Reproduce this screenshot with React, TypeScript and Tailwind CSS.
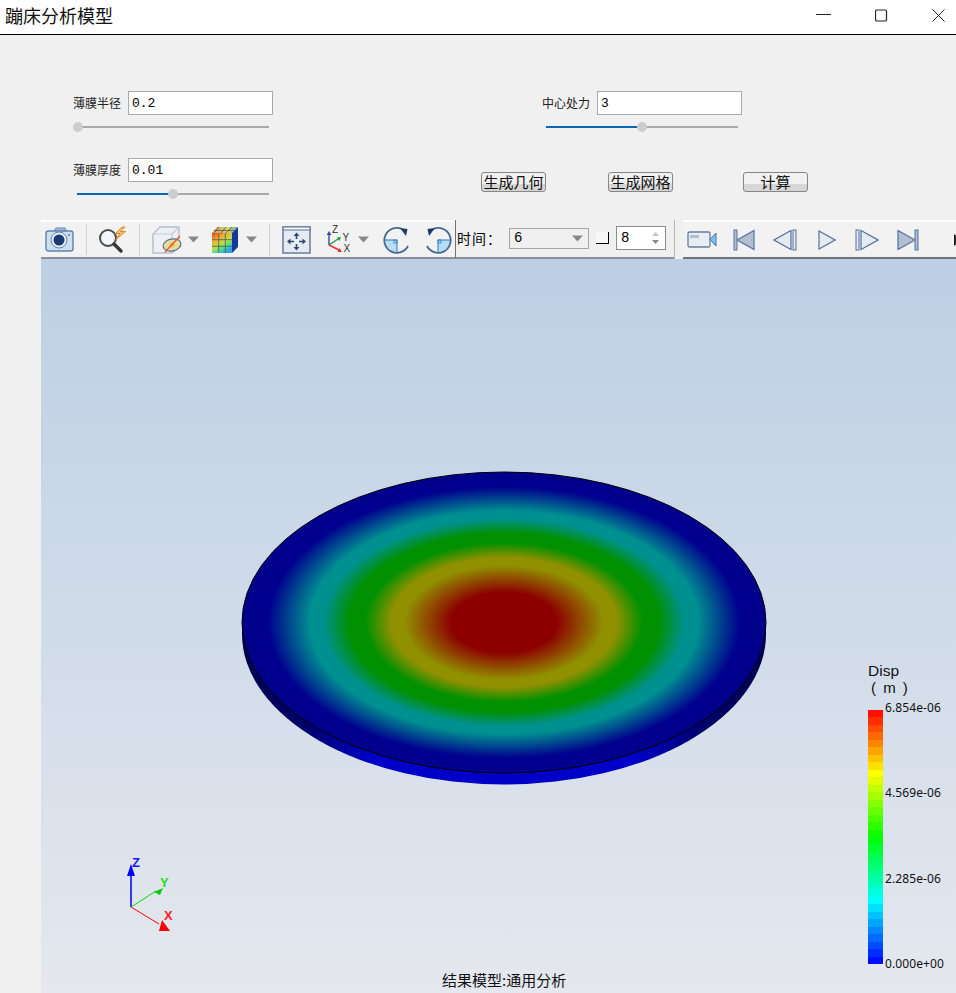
import { ReactNode } from 'react';

const Caret = ({ className = '' }: { className?: string }) => (
  <svg width="11" height="7" viewBox="0 0 11 7" className={className}>
    <path d="M0 0.5h11L5.5 6.5z" fill="#85898f" />
  </svg>
);

function SliderField({ label, value, percent }: { label: string; value: string; percent: number }) {
  return (
    <div className="w-[200px]">
      <div className="flex items-center">
        <span className="w-[48px] text-[12px] leading-none text-[#222]">{label}</span>
        <input
          readOnly
          value={value}
          className="ml-[7px] h-[24px] w-[145px] border border-[#a9a9a9] bg-white pl-[3px] pt-[1px] font-['Liberation_Mono',monospace] text-[13px] text-black outline-none"
        />
      </div>
      <div className="relative ml-[4px] mt-[11px] h-[2px] w-[192px] bg-[#a9a9a9]">
        <div className="h-full bg-[#0a68b8]" style={{ width: `${percent}%` }} />
        <div
          className="absolute top-[-4px] ml-[-5px] h-[10px] w-[10px] rounded-full bg-[#cdcdcd]"
          style={{ left: `${percent}%` }}
        />
      </div>
    </div>
  );
}

function ActionButton({ children, className = '' }: { children: ReactNode; className?: string }) {
  return (
    <button className={`h-[20px] w-[65px] rounded-[3px] border border-[#868686] bg-linear-to-b from-[#f1f1f1] from-60% to-[#d6d6d6] to-60% pb-[1px] text-[15px] leading-none text-[#111] ${className}`}>
      {children}
    </button>
  );
}

const Sep = ({ className = '' }: { className?: string }) => <div className={`h-[31px] w-px bg-[#cfd2d6] ${className}`} />;

const CameraIcon = () => (
  <svg width="30" height="26" viewBox="0 0 30 26" className="ml-[4px]">
    <path d="M9 4l2-3h9l1.500 3z" fill="#a9c0dc" stroke="#5f82ad" />
    <rect x="1" y="4" width="27" height="20" rx="2.500" fill="#cfdef0" stroke="#5f82ad" strokeWidth="1.400" />
    <circle cx="14" cy="13" r="8" fill="#e6eef8" stroke="#5f82ad" />
    <circle cx="14" cy="13" r="5.500" fill="#1c3a73" />
    <circle cx="24" cy="8" r="1" fill="#4d6f9c" />
  </svg>
);

const SearchBoltIcon = () => (
  <svg width="31" height="28" viewBox="0 0 31 28" className="ml-[11px]">
    <circle cx="10" cy="12" r="8" fill="#f3f6fa" stroke="#474b50" strokeWidth="2" />
    <path d="M16 18l7 7" stroke="#34383d" strokeWidth="3.400" strokeLinecap="round" />
    <path d="M24 1l-6.500 6.500h4.500l-4 6 9.500-8h-5l4.500-4.500z" fill="#f3c078" stroke="#e08a1c" strokeWidth="1" />
  </svg>
);

const CubeEyeIcon = () => (
  <svg width="31" height="29" viewBox="0 0 31 29" className="ml-[12px]">
    <path d="M1 9l7-7h19v19l-7 7H1z" fill="#eef0f4" stroke="#b6c0d0" strokeWidth="1.500" />
    <path d="M1 9h19v19M20 9l7-7" fill="none" stroke="#c2cbd8" strokeWidth="1.200" />
    <ellipse cx="20" cy="20" rx="9" ry="6" transform="rotate(-12 20 20)" fill="#ecdc9b" stroke="#4f6f98" strokeWidth="1.200" />
    <circle cx="20" cy="20" r="2.500" fill="#e0b964" />
    <path d="M28 11L13 27" stroke="#d8562a" strokeWidth="1.200" />
  </svg>
);

const ColorCubeIcon = () => (
  <svg width="28" height="28" viewBox="0 0 28 28" className="ml-[12px]">
    <defs>
      <linearGradient id="cubeFront" x1="0" y1="0" x2="0.6" y2="1">
        <stop offset="0" stopColor="#e8402e" />
        <stop offset="0.35" stopColor="#f2b12e" />
        <stop offset="0.6" stopColor="#b5e04a" />
        <stop offset="0.85" stopColor="#3fd6a0" />
        <stop offset="1" stopColor="#2aa4e8" />
      </linearGradient>
      <linearGradient id="cubeTop" x1="0" y1="0" x2="1" y2="0">
        <stop offset="0" stopColor="#e09a5a" />
        <stop offset="0.6" stopColor="#d8cf70" />
        <stop offset="1" stopColor="#62b08a" />
      </linearGradient>
    </defs>
    <path d="M1 7l5-6h21l-6 6z" fill="url(#cubeTop)" />
    <path d="M21 7l6-6v20l-6 6z" fill="#15389a" />
    <rect x="1" y="7" width="20" height="20" fill="url(#cubeFront)" />
    <path d="M7.700 7v20M14.300 7v20M1 13.700h20M1 20.300h20M8 1L3 7M15 1l-5 6M21 1l-6 6M3 4.500h21" stroke="#4d5a52" strokeWidth="0.800" fill="none" />
  </svg>
);

const FitIcon = () => (
  <svg width="29" height="28" viewBox="0 0 29 28" className="ml-[12px]">
    <rect x="1" y="1" width="27" height="26" fill="#e6ebf2" stroke="#5c7497" strokeWidth="1.400" />
    <rect x="1" y="1" width="27" height="3" fill="#f6f8fb" stroke="#5c7497" />
    <path d="M14.500 9v4M14.500 18v4M7 15.500h5M17 15.500h5" stroke="#2f4a70" strokeWidth="1.600" />
    <path d="M14.500 6.500l3 3.500h-6zM14.500 24.500l3-3.500h-6zM5 15.500l3.500-3v6zM24 15.500l-3.500-3v6z" fill="#2f4a70" />
  </svg>
);

const TriadIcon = () => (
  <svg width="26" height="29" viewBox="0 0 26 29" className="ml-[16px] font-['Liberation_Sans',sans-serif]">
    <path d="M2 20V9" stroke="#2a4fa8" strokeWidth="1.400" />
    <path d="M2 6l2.500 4h-5z" fill="#2a4fa8" />
    <path d="M2 20l9-6" stroke="#1e9a3c" strokeWidth="1.400" />
    <path d="M14 12l-1.500 4-2.800-3.500z" fill="#1e9a3c" />
    <path d="M2 20l10 5" stroke="#e13232" strokeWidth="1.400" />
    <path d="M15 27l-4.500 0 2-4z" fill="#e13232" />
    <text x="5" y="7.500" fontSize="10" fill="#333">Z</text>
    <text x="15.500" y="15.500" fontSize="10" fill="#333">Y</text>
    <text x="16.500" y="27" fontSize="10" fill="#333">X</text>
  </svg>
);

const RotateIcon = ({ flip = false, className = '' }: { flip?: boolean; className?: string }) => (
  <svg width="28" height="28" viewBox="0 0 28 28" className={`${flip ? '-scale-x-100' : ''} ${className}`}>
    <path d="M2 14H14V26A12 12 0 0 1 2 14z" fill="#b5def5" />
    <path d="M19 3A12.500 12.500 0 1 0 25 20" fill="none" stroke="#466790" strokeWidth="1.800" />
    <path d="M1.500 14H14V26" fill="none" stroke="#2f7cc0" strokeWidth="1" />
    <rect x="11" y="14" width="3" height="3" fill="none" stroke="#2f7cc0" strokeWidth="0.800" />
    <path d="M17 2l7.500 1-1.500 7z" fill="#1c3a6e" />
  </svg>
);

const CamcorderIcon = () => (
  <svg width="31" height="17" viewBox="0 0 31 17" className="ml-[4px] shrink-0">
    <rect x="1" y="1" width="22" height="15" rx="1.500" fill="#e8edf4" stroke="#647ea3" strokeWidth="1.300" />
    <rect x="3" y="4" width="9" height="3" fill="#b4bfcd" />
    <path d="M23 8.500L29 2v13z" fill="#7cc3e8" stroke="#4f70a0" />
  </svg>
);

const playerDark = '#b2bfd1';
const playerLight = '#e6ebf2';
const playerStroke = '#55729c';

const PlayerFirst = ({ className = '' }: { className?: string }) => (
  <svg width="22" height="22" viewBox="0 0 22 22" className={`shrink-0 ${className}`}>
    <path d="M21 1.500v19L4 11z" fill={playerDark} stroke={playerStroke} strokeWidth="1.200" />
    <rect x="1" y="1" width="3" height="20" fill={playerDark} stroke={playerStroke} />
  </svg>
);

const PlayerPrev = ({ className = '' }: { className?: string }) => (
  <svg width="24" height="22" viewBox="0 0 24 22" className={`shrink-0 ${className}`}>
    <path d="M18 1.500v19L1 11z" fill={playerLight} stroke={playerStroke} strokeWidth="1.200" />
    <rect x="20" y="1" width="3" height="20" fill={playerLight} stroke={playerStroke} />
  </svg>
);

const PlayerPlay = ({ className = '' }: { className?: string }) => (
  <svg width="18" height="20" viewBox="0 0 18 20" className={`shrink-0 ${className}`}>
    <path d="M1 1v18l16-9z" fill={playerLight} stroke={playerStroke} strokeWidth="1.200" />
  </svg>
);

const PlayerNext = ({ className = '' }: { className?: string }) => (
  <svg width="24" height="22" viewBox="0 0 24 22" className={`shrink-0 ${className}`}>
    <rect x="1" y="1" width="3" height="20" fill={playerLight} stroke={playerStroke} />
    <path d="M6 1.500v19L23 11z" fill={playerLight} stroke={playerStroke} strokeWidth="1.200" />
  </svg>
);

const PlayerLast = ({ className = '' }: { className?: string }) => (
  <svg width="22" height="22" viewBox="0 0 22 22" className={`shrink-0 ${className}`}>
    <path d="M1 1.500v19L18 11z" fill={playerDark} stroke={playerStroke} strokeWidth="1.200" />
    <rect x="18" y="1" width="3" height="20" fill={playerDark} stroke={playerStroke} />
  </svg>
);

function Toolbar() {
  return (
    <div className="flex h-[39px] bg-[#f0f0f0]">
      <div className="flex w-[414px] items-center border-b-2 border-t-2 border-b-[#8b9098] border-t-white bg-[#f2f2f2]">
        <CameraIcon />
        <Sep className="ml-[11px]" />
        <SearchBoltIcon />
        <Sep className="ml-[10px]" />
        <CubeEyeIcon />
        <Caret className="ml-[5px]" />
        <ColorCubeIcon />
        <Caret className="ml-[7px]" />
        <Sep className="ml-[12px]" />
        <FitIcon />
        <TriadIcon />
        <Caret className="ml-[5px]" />
        <RotateIcon className="ml-[14px]" />
        <RotateIcon flip className="ml-[13px]" />
      </div>
      <div className="flex w-[219px] items-center border-b-2 border-l border-b-[#8b9098] border-l-[#6e7175] pb-[1px]">
        <span className="ml-[1px] w-[52px] pt-[1px] text-[14px] tracking-[1px] text-black">时间：</span>
        <div className="flex h-[21px] w-[80px] items-center justify-between border border-[#a5a5a5] pl-[4px] pr-[5px] font-['Liberation_Mono',monospace] text-[14px]">
          6
          <Caret />
        </div>
        <div className="ml-[7px] h-[12px] w-[13px] border-b border-r border-b-black border-r-black bg-[#f7f7f7]" />
        <div className="ml-[7px] flex h-[24px] w-[50px] items-center justify-between border border-[#8c8c8c] bg-white pl-[4px] pr-[6px] font-['Liberation_Mono',monospace] text-[14px]">
          8
          <svg width="7" height="12" viewBox="0 0 7 12">
            <path d="M3.500 0L7 4H0z" fill="#c6c6c6" />
            <path d="M0 8h7l-3.500 4z" fill="#8a8a8a" />
          </svg>
        </div>
      </div>
      <div className="w-px self-stretch bg-[#b5b5b5]" />
      <div className="ml-[8px] flex flex-1 items-center overflow-hidden border-b-2 border-t-2 border-b-[#6f7276] border-t-white bg-[#f2f2f2]">
        <CamcorderIcon />
        <PlayerFirst className="ml-[15px]" />
        <PlayerPrev className="ml-[18px]" />
        <PlayerPlay className="ml-[21px]" />
        <PlayerNext className="ml-[19px]" />
        <PlayerLast className="ml-[18px]" />
        <svg width="8" height="12" viewBox="0 0 8 12" className="ml-[35px] shrink-0">
          <path d="M0 0l8 6-8 6z" fill="#222" />
        </svg>
      </div>
    </div>
  );
}

const bandCount = 34;

function jet(t: number) {
  const r = Math.min(1, Math.max(0, t < 0.5 ? 0 : t < 0.75 ? (t - 0.5) * 4 : 1));
  const g = Math.min(1, Math.max(0, t < 0.25 ? t * 4 : t < 0.75 ? 1 : (1 - t) * 4));
  const b = Math.min(1, Math.max(0, t < 0.25 ? 1 : t < 0.5 ? (0.5 - t) * 4 : 0));
  return `rgb(${Math.round(r * 255)},${Math.round(g * 255)},${Math.round(b * 255)})`;
}

function Legend() {
  const labels = ['6.854e-06', '4.569e-06', '2.285e-06', '0.000e+00'];
  return (
    <div className="absolute left-[827px] top-[403px] text-[#111]">
      <div className="font-['Liberation_Sans',sans-serif] text-[15px] leading-[17px]">
        <div className="text-[15.500px]">Disp</div>
        <div className="ml-[3px] [word-spacing:3px]">( m )</div>
      </div>
      <div className="mt-[14px] flex font-['Noto_Sans',sans-serif]">
        <svg width="15" height="254" viewBox="0 0 15 254" shapeRendering="crispEdges">
          {Array.from({ length: bandCount }, (_, i) => (
            <rect key={i} x="0" y={(i * 254) / bandCount} width="15" height={254 / bandCount + 0.5} fill={jet(1 - (i + 0.5) / bandCount)} />
          ))}
        </svg>
        <div className="ml-[2px] mt-[-10px] flex h-[271px] flex-col justify-between text-[12px] leading-[15px] tracking-[0.1px]">
          {labels.map((l) => (
            <span key={l}>{l}</span>
          ))}
        </div>
      </div>
    </div>
  );
}

function Disc() {
  return (
    <svg width="528" height="316" viewBox="240 470 528 316" className="absolute left-[199px] top-[211px]">
      <defs>
        <radialGradient id="field" cx="504" cy="622.500" r="262" gradientUnits="userSpaceOnUse" gradientTransform="translate(0 622.500) scale(1 0.575) translate(0 -622.500)">
          <stop offset="0" stopColor="#8c0000" />
          <stop offset="0.2" stopColor="#8c0000" />
          <stop offset="0.3" stopColor="#905000" />
          <stop offset="0.38" stopColor="#909000" />
          <stop offset="0.43" stopColor="#909000" />
          <stop offset="0.53" stopColor="#009000" />
          <stop offset="0.59" stopColor="#009000" />
          <stop offset="0.69" stopColor="#009090" />
          <stop offset="0.74" stopColor="#009090" />
          <stop offset="0.9" stopColor="#00008e" />
          <stop offset="1" stopColor="#00008c" />
        </radialGradient>
        <linearGradient id="rim" x1="242" x2="766" y1="0" y2="0" gradientUnits="userSpaceOnUse">
          <stop offset="0" stopColor="#000050" />
          <stop offset="0.12" stopColor="#00006a" />
          <stop offset="0.25" stopColor="#0000c8" />
          <stop offset="0.75" stopColor="#0000c8" />
          <stop offset="0.88" stopColor="#00006a" />
          <stop offset="1" stopColor="#000050" />
        </linearGradient>
      </defs>
      <path d="M242 622.500V634A262 150.500 0 0 0 766 634V622.500z" fill="url(#rim)" />
      <ellipse cx="504" cy="622.500" rx="262" ry="150.500" fill="url(#field)" stroke="#000" strokeWidth="1" />
    </svg>
  );
}

function Triad() {
  return (
    <svg width="70" height="90" viewBox="120 850 70 90" className="absolute left-[79px] top-[591px] font-['Liberation_Sans',sans-serif] text-[13px] font-bold">
      <path d="M131 907V872" stroke="#0000ff" strokeWidth="1.500" />
      <path d="M131 864l4 12h-8z" fill="#0000ff" />
      <path d="M131 907l25-16" stroke="#00e000" strokeWidth="1" />
      <path d="M163 888l-3 7-6-3z" fill="#00d000" />
      <path d="M131 907l28 17" stroke="#ff0000" strokeWidth="1" />
      <path d="M170 931h-11l3-11z" fill="#ff0000" />
      <text x="132" y="867" fill="#1a1aff">Z</text>
      <text x="160" y="887" fill="#20e020">Y</text>
      <text x="164" y="920" fill="#ff2020">X</text>
    </svg>
  );
}

export default function App() {
  return (
    <div className="flex h-[993px] w-[956px] flex-col overflow-hidden bg-[#f0f0f0] font-['Noto_Sans_CJK_SC','Noto_Sans',sans-serif]">
      {/* Title bar */}
      <header className="flex h-[35px] shrink-0 items-center justify-between border-b border-black bg-white pb-[4px] pl-[5px] pr-[11px]">
        <h1 className="text-[18px] leading-none text-[#111]">蹦床分析模型</h1>
        <div className="flex items-center gap-[44px]">
          <svg width="15" height="14" viewBox="0 0 15 14">
            <path d="M0 6.500h15" stroke="#222" />
          </svg>
          <svg width="13" height="13" viewBox="0 0 13 13">
            <rect x="0.500" y="1" width="11" height="11" rx="1.500" fill="none" stroke="#222" strokeWidth="1.200" />
          </svg>
          <svg width="13" height="13" viewBox="0 0 13 13">
            <path d="M0.500 0.500l12 12M12.500 0.500l-12 12" stroke="#222" />
          </svg>
        </div>
      </header>

      {/* Parameters */}
      <section className="h-[185px] shrink-0 pl-[73px] pt-[56px]">
        <div className="flex">
          <SliderField label="薄膜半径" value="0.2" percent={0.5} />
          <div className="ml-[269px]">
            <SliderField label="中心处力" value="3" percent={50} />
          </div>
        </div>
        <div className="mt-[30px] flex">
          <SliderField label="薄膜厚度" value="0.01" percent={50} />
          <div className="ml-[208px] mt-[14px] flex">
            <ActionButton>生成几何</ActionButton>
            <ActionButton className="ml-[62px]">生成网格</ActionButton>
            <ActionButton className="ml-[70px]">计算</ActionButton>
          </div>
        </div>
      </section>

      {/* Viewer */}
      <div className="ml-[41px] flex min-h-0 flex-1 flex-col">
        <Toolbar />
        <main className="relative flex-1 bg-linear-to-b from-[#bccfe4] to-[#e5e8ee]">
          <Disc />
          <Triad />
          <Legend />
          <div className="absolute bottom-[2px] left-[401px] text-[15px] leading-[22px] text-[#111]">结果模型:通用分析</div>
        </main>
      </div>
    </div>
  );
}
